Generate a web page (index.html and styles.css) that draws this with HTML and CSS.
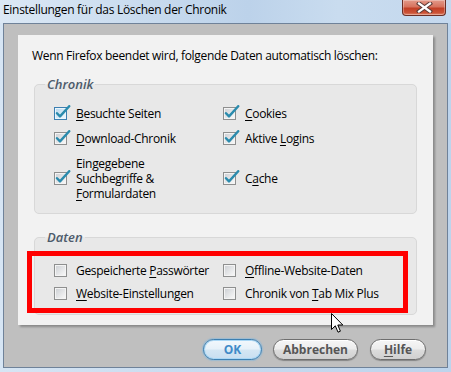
FILE: index.html
```html
<!DOCTYPE html>
<html lang="de">
<head>
<meta charset="utf-8">
<title>Einstellungen für das Löschen der Chronik</title>
<link rel="stylesheet" href="styles.css">
</head>
<body>
<svg class="defs" width="0" height="0" aria-hidden="true">
  <defs>
    <linearGradient id="boxfill" x1="0" y1="0" x2="1" y2="1">
      <stop offset="0" stop-color="#cfd2d6"/>
      <stop offset="1" stop-color="#f7f7f7"/>
    </linearGradient>
    <linearGradient id="boxhover" x1="0" y1="0" x2="1" y2="1">
      <stop offset="0" stop-color="#b9d9ee"/>
      <stop offset="1" stop-color="#eef7fd"/>
    </linearGradient>
    <g id="box">
      <rect x="0.5" y="2.5" width="12" height="12" fill="#f4f4f4" stroke="#8e8f8f"/>
      <rect x="2" y="4" width="9" height="9" fill="url(#boxfill)"/>
    </g>
    <g id="boxh">
      <rect x="0.5" y="2.5" width="12" height="12" fill="#eaf6fd" stroke="#3c7fb1"/>
      <rect x="2" y="4" width="9" height="9" fill="url(#boxhover)"/>
    </g>
    <path id="tick" d="M3 8.2 L6 11.4 L15.2 1.2" fill="none" stroke="#2a8bad" stroke-width="2.4" stroke-linecap="round" stroke-linejoin="round"/>
  </defs>
</svg>

<div class="window">
  <div class="titlebar">
    <span class="title">Einstellungen für das Löschen der Chronik</span>
    <div class="close">
      <svg width="17" height="11" viewBox="0 0 17 11"><path d="M3 1.5 L14 9.5 M14 1.5 L3 9.5" stroke="#5a3a36" stroke-width="4.2" stroke-linecap="square"/><path d="M3 1.5 L14 9.5 M14 1.5 L3 9.5" stroke="#ffffff" stroke-width="2.2" stroke-linecap="square"/></svg>
    </div>
  </div>

  <div class="client">
    <div class="panel">
      <p class="intro">Wenn Firefox beendet wird, folgende Daten automatisch löschen:</p>

      <fieldset class="group chronik">
        <legend>Chronik</legend>
        <div class="grid">
          <div class="cb"><svg class="chk" viewBox="0 0 17 17"><use href="#boxh"/><use href="#tick"/></svg><span><u>B</u>esuchte Seiten</span></div>
          <div class="cb"><svg class="chk" viewBox="0 0 17 17"><use href="#box"/><use href="#tick"/></svg><span><u>C</u>ookies</span></div>
          <div class="cb"><svg class="chk" viewBox="0 0 17 17"><use href="#box"/><use href="#tick"/></svg><span><u>D</u>ownload-Chronik</span></div>
          <div class="cb"><svg class="chk" viewBox="0 0 17 17"><use href="#box"/><use href="#tick"/></svg><span>Aktive <u>L</u>ogins</span></div>
          <div class="cb"><svg class="chk" viewBox="0 0 17 17"><use href="#box"/><use href="#tick"/></svg><span>Eingegebene<br>Suchbegriffe &amp;<br><u>F</u>ormulardaten</span></div>
          <div class="cb"><svg class="chk" viewBox="0 0 17 17"><use href="#box"/><use href="#tick"/></svg><span>C<u>a</u>che</span></div>
        </div>
      </fieldset>

      <fieldset class="group daten">
        <legend>Daten</legend>
        <div class="grid">
          <div class="cb"><svg class="chk" viewBox="0 0 17 17"><use href="#box"/></svg><span>Gespeicherte <u>P</u>asswörter</span></div>
          <div class="cb"><svg class="chk" viewBox="0 0 17 17"><use href="#box"/></svg><span><u>O</u>ffline-Website-Daten</span></div>
          <div class="cb"><svg class="chk" viewBox="0 0 17 17"><use href="#box"/></svg><span><u>W</u>ebsite-Einstellungen</span></div>
          <div class="cb"><svg class="chk" viewBox="0 0 17 17"><use href="#box"/></svg><span>Chronik von <u>T</u>ab Mix Plus</span></div>
        </div>
      </fieldset>
    </div>

    <div class="buttons">
      <button class="btn default">OK</button>
      <button class="btn">Abbrechen</button>
      <button class="btn"><u>H</u>ilfe</button>
    </div>
  </div>

  <div class="highlight"></div>
  <svg class="cursor" width="13" height="21" viewBox="0 0 13 21"><path d="M0.5 0.5 L0.5 16.5 L4.3 12.8 L7 19.2 L9.4 18.2 L6.8 12 L11.8 12 Z" fill="#ffffff" stroke="#000000" stroke-width="1" stroke-linejoin="miter"/></svg>
</div>
</body>
</html>
```

FILE: styles.css
```css
* { box-sizing: border-box; }

html, body {
  margin: 0;
  padding: 0;
  width: 451px;
  height: 372px;
  overflow: hidden;
}

body {
  font-family: "Open Sans", "Noto Sans", "DejaVu Sans", sans-serif;
  font-size: 12px;
  color: #000;
  background: #c3d8ee;
}

.defs { position: absolute; }

.window {
  position: relative;
  width: 451px;
  height: 372px;
  background: linear-gradient(to right, #d6e5f4 0%, #c8dbef 45%, #bdd4ec 100%);
  display: flex;
  flex-direction: column;
}

.titlebar {
  height: 23px;
  display: flex;
  justify-content: space-between;
  align-items: flex-start;
  background: linear-gradient(to right, #dbe8f5 0%, #cadcef 30%, #bcd2ea 55%, #c9dcef 75%, #c4d8ee 100%);
}

.title {
  padding: 2px 0 0 3px;
  line-height: 16px;
  font-size: 12px;
  color: #000;
  letter-spacing: -0.3px;
}

.close {
  width: 44px;
  height: 16px;
  margin-right: 5px;
  border: 1px solid #6b2e25;
  border-top: none;
  border-radius: 0 0 4px 4px;
  background: linear-gradient(to bottom, #e39a8a 0%, #d7735e 45%, #c23f26 55%, #cb5236 85%, #e08a70 100%);
  box-shadow: inset 0 0 0 1px rgba(255,255,255,0.3);
  display: flex;
  justify-content: center;
  align-items: center;
}

.close svg { display: block; }

.client {
  margin: 0 3px 4px 3px;
  border: 1px solid #6f8299;
  background: #bfbfbf;
  padding: 11px 14px 7px 14px;
  flex: 1;
  display: flex;
  flex-direction: column;
}

.panel {
  width: 415px;
  height: 290px;
  background: #f2f2f2;
  box-shadow: 2px 2px 2px rgba(0,0,0,0.28);
  padding: 13px 14px 0 14px;
}

.intro {
  margin: 0;
  line-height: 15px;
  letter-spacing: -0.32px;
}

.group {
  margin: 0 2px;
  border: 1px solid #d8d8d8;
  border-radius: 5px;
  background: #e8e8e8;
  padding: 14px 8px 12px 19px;
  min-width: 0;
}

.group legend {
  margin-left: -9px;
  padding: 0 2px;
  font-style: italic;
  font-weight: 600;
  font-size: 13px;
  line-height: 16px;
  color: #4d5b6b;
}

.chronik { margin-top: 13px; }

.chronik .grid { row-gap: 10px; }

.daten {
  margin-top: 15px;
  padding-top: 18px;
  padding-bottom: 13px;
}

.grid {
  display: grid;
  grid-template-columns: 169px 1fr;
  row-gap: 9px;
}

.daten .grid { row-gap: 8px; }

.cb {
  display: flex;
  align-items: center;
  line-height: 15px;
  letter-spacing: -0.3px;
}

.chk {
  width: 17px;
  height: 17px;
  flex: none;
  margin: -1px 5px -1px 0;
  display: block;
}

u {
  text-decoration: underline;
  text-underline-offset: 2px;
}

.buttons {
  margin-top: 14px;
  display: flex;
  justify-content: flex-end;
  gap: 11px;
  padding-right: 7px;
}

.btn {
  height: 21px;
  padding: 0;
  border: 1px solid #6e6e6e;
  border-radius: 11px;
  background: linear-gradient(to bottom, #f6f6f6 0%, #ececec 48%, #dcdcdc 52%, #d0d0d0 100%);
  box-shadow: inset 0 1px 0 #ffffff, 0 1px 1px rgba(0,0,0,0.3);
  font-family: "Open Sans", "Noto Sans", "DejaVu Sans", sans-serif;
  font-size: 12px;
  font-weight: 700;
  color: #565656;
  line-height: 18px;
  width: 85px;
}

.btn:nth-child(1) { width: 59px; }
.btn:nth-child(3) { width: 56px; margin-left: 1px; }

.btn.default {
  border-color: #3c7fb1;
  color: #3f8ac8;
  box-shadow: inset 0 0 0 1px #a9d7f5, 0 0 1px 1px rgba(110,180,230,0.45);
  background: linear-gradient(to bottom, #f2f8fc 0%, #e6f1f9 48%, #d4e6f3 52%, #c8def0 100%);
}

.highlight {
  position: absolute;
  left: 27px;
  top: 251px;
  width: 381px;
  height: 62px;
  border: 5px solid #ff0000;
  pointer-events: none;
}

.cursor {
  position: absolute;
  left: 331px;
  top: 313px;
  display: block;
}
```
